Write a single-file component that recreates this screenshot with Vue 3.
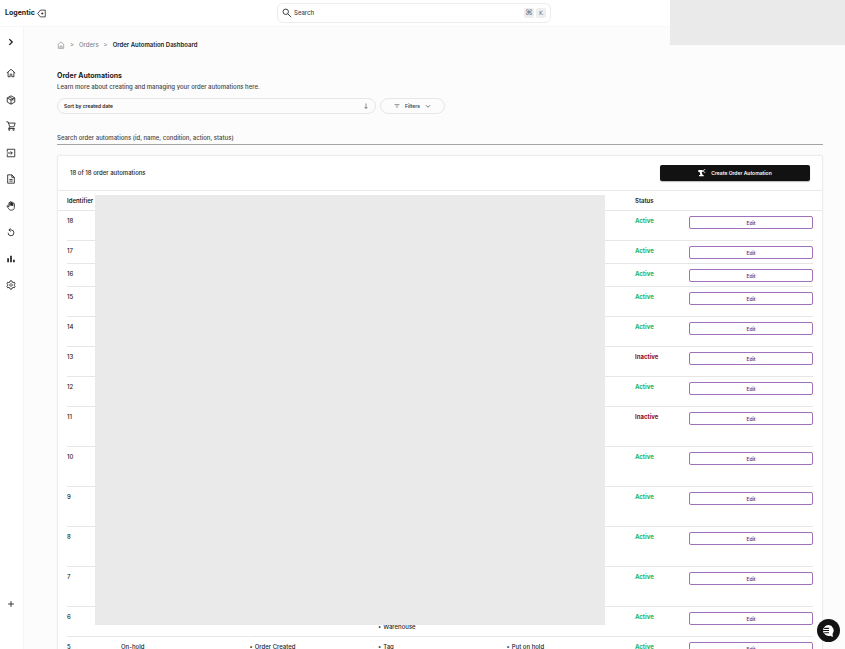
<script setup>
import { ref } from 'vue';

const search = ref('');
const query = ref('');
const sort = ref('created');

const navItems = [
  { name: 'Home', d: 'M2 12 12 3l10 9M5 10v11h5v-5a2 2 0 0 1 4 0v5h5V10' },
  { name: 'Products', d: 'M12 2 21 7v10l-9 5-9-5V7zM3 7l9 5 9-5M12 12v10M7.500 4.500l9 5v4' },
  {
    name: 'Orders',
    d: 'M1 2h4l4 12h10l3-9H6M9 14l-3 4h15M8 20a1.500 1.500 0 1 0 .1 0M18 20a1.500 1.500 0 1 0 .1 0',
  },
  { name: 'Inbound', d: 'M3 9V3h18v18H3v-6M2 12h13M11 8l4 4-4 4' },
  { name: 'Documents', d: 'M4 2h10l6 6v14H4zM14 2v6h6M8 13h8M8 17h8' },
  {
    name: 'Holds',
    d: 'M7 14V5a1.500 1.500 0 0 1 3 0v6V3a1.500 1.500 0 0 1 3 0v8V4a1.500 1.500 0 0 1 3 0v8V7a1.500 1.500 0 0 1 4 0v8c0 5-3 7-7 7-4 0-6-2-7-4l-4-6c1-2 3-1 5 2',
  },
  { name: 'Returns', d: 'M5 14a7 7 0 1 0 7-7H7M11 3 7 7l4 4' },
  { name: 'Analytics', d: 'M5 10v10M12 4v16M19 14v6' },
  {
    name: 'Settings',
    d: 'M10 2h4l.7 3 2.300 1.300 3-1 2 3.500-2.300 2v2.400l2.300 2-2 3.500-3-1-2.300 1.300-.7 3h-4l-.7-3L7 17.700l-3 1-2-3.500 2.300-2v-2.400L2 8.800l2-3.500 3 1L9.300 5zM12 9a3 3 0 1 0 .1 0',
  },
];

const automations = [
  { id: 18, active: true, size: 'medium' },
  { id: 17, active: true, size: 'small' },
  { id: 16, active: true, size: 'small' },
  { id: 15, active: true, size: 'medium' },
  { id: 14, active: true, size: 'medium' },
  { id: 13, active: false, size: 'medium' },
  { id: 12, active: true, size: 'medium' },
  { id: 11, active: false, size: 'large' },
  { id: 10, active: true, size: 'large' },
  { id: 9, active: true, size: 'large' },
  { id: 8, active: true, size: 'large' },
  { id: 7, active: true, size: 'large' },
  { id: 6, active: true, size: 'medium', conditions: ['', 'Warehouse'] },
  {
    id: 5,
    active: true,
    size: 'medium',
    name: 'On-hold',
    triggers: ['Order Created'],
    conditions: ['Tag'],
    actions: ['Put on hold'],
  },
];
</script>

<template>
  <div class="shell">
    <header class="topbar">
      <a class="logo" href="#">
        Logentic
        <svg viewBox="0 0 24 24"><path d="M9 3h13v18H9L2 12zM17 12h-6M14 9v6" /></svg>
      </a>
      <label class="search">
        <svg viewBox="0 0 24 24"><circle cx="9" cy="9" r="6.500" /><path d="m14 14 8 8" /></svg>
        <input v-model="search" type="text" placeholder="Search" aria-label="Search" />
        <kbd>⌘</kbd>
        <kbd>K</kbd>
      </label>
    </header>
    <div class="account"></div>

    <div class="body">
      <aside class="sidebar">
        <button class="icon-btn" aria-label="Expand menu">
          <svg viewBox="0 0 24 24"><path class="thick" d="m8 5 7 7-7 7" /></svg>
        </button>
        <nav class="nav">
          <a v-for="item in navItems" :key="item.name" href="#" :aria-label="item.name">
            <svg viewBox="0 0 24 24" :class="{ bars: item.name === 'Analytics' }">
              <path :d="item.d" />
            </svg>
          </a>
        </nav>
        <button class="icon-btn add" aria-label="Add">
          <svg viewBox="0 0 24 24"><path d="M12 5v14M5 12h14" /></svg>
        </button>
      </aside>

      <main class="content">
        <nav class="breadcrumb">
          <a href="#" aria-label="Home">
            <svg viewBox="0 0 24 24"><path d="M4 9.500 12 3l8 6.500V22H4zM9 22v-7h6v7" /></svg>
          </a>
          <span>&gt;</span>
          <a href="#">Orders</a>
          <span>&gt;</span>
          <strong>Order Automation Dashboard</strong>
        </nav>

        <h1>Order Automations</h1>
        <p class="intro">Learn more about creating and managing your order automations here.</p>

        <div class="controls">
          <div class="sort">
            <select v-model="sort" aria-label="Sort">
              <option value="created">Sort by created date</option>
              <option value="name">Sort by name</option>
            </select>
            <svg viewBox="0 0 24 24"><path d="M12 2v20M6 16l6 6 6-6" /></svg>
          </div>
          <button class="filters">
            <svg viewBox="0 0 24 24"><path d="M2 6h20M6 12h12M10 18h4" /></svg>
            Filters
            <svg viewBox="0 0 24 24"><path class="thick" d="m4 9 8 8 8-8" /></svg>
          </button>
        </div>

        <input
          v-model="query"
          class="query"
          type="text"
          placeholder="Search order automations (id, name, condition, action, status)"
          aria-label="Search order automations"
        />

        <section class="card">
          <div class="card-head">
            <span>18 of 18 order automations</span>
            <button class="create">
              <svg viewBox="0 0 24 24">
                <path d="M1 3h13v6h-3l3 9h3v4H3v-4h4L5 9H1z" />
                <path class="claw" d="M13 6h4M22 2h-4l-2 4 2 4h4" />
              </svg>
              Create Order Automation
            </button>
          </div>
          <div class="table-wrap">
            <table>
              <thead>
                <tr>
                  <th class="col-id">Identifier</th>
                  <th></th>
                  <th></th>
                  <th></th>
                  <th></th>
                  <th class="col-status">Status</th>
                  <th class="col-edit"></th>
                </tr>
              </thead>
              <tbody>
                <tr v-for="row in automations" :key="row.id" :class="row.size">
                  <td>{{ row.id }}</td>
                  <td>{{ row.name }}</td>
                  <td>
                    <div v-for="t in row.triggers" :key="t"><i>•</i>{{ t }}</div>
                  </td>
                  <td>
                    <div v-for="c in row.conditions" :key="c" class="line">
                      <template v-if="c"><i>•</i>{{ c }}</template>
                    </div>
                  </td>
                  <td>
                    <div v-for="a in row.actions" :key="a"><i>•</i>{{ a }}</div>
                  </td>
                  <td :class="row.active ? 'active' : 'inactive'">
                    {{ row.active ? 'Active' : 'Inactive' }}
                  </td>
                  <td><button class="edit">Edit</button></td>
                </tr>
              </tbody>
            </table>
            <div class="cover"></div>
          </div>
        </section>
      </main>
    </div>

    <button class="chat" aria-label="Chat">
      <svg viewBox="0 0 24 24">
        <path d="M12 2a10 10 0 1 0 3 19.500l5 2.500-.5-6A10 10 0 0 0 12 2z" />
        <path class="lines" d="M4 8h9M2 12h11M4 16h9" />
      </svg>
    </button>
  </div>
</template>

<style>
body {
  background: #fcfcfc;
}
</style>

<style scoped>
.shell {
  position: relative;
  display: flex;
  flex-direction: column;
  height: 100vh;
  overflow: hidden;
  font-family: Inter, sans-serif;
  font-size: 6px;
  line-height: 10px;
  font-weight: 500;
  color: #1c1c1c;
}
* {
  box-sizing: border-box;
}
button,
input,
select {
  font: inherit;
  color: inherit;
  background: none;
  border: 0;
  padding: 0;
  outline: none;
}
button {
  cursor: pointer;
}
a {
  color: inherit;
  text-decoration: none;
}
svg {
  display: block;
  flex: none;
  fill: none;
  stroke: currentColor;
  stroke-width: 2;
}
.topbar {
  flex: none;
  display: flex;
  align-items: center;
  justify-content: center;
  height: 27px;
  padding-right: 22px;
  background: #fff;
  border-bottom: 1px solid #f7f7f7;
}
.logo {
  flex: 1;
  display: flex;
  align-items: center;
  gap: 2px;
  padding-left: 5px;
  font-size: 7px;
  font-weight: 700;
}
.logo svg {
  width: 9px;
  height: 9px;
}
.search {
  display: flex;
  align-items: center;
  gap: 2px;
  width: 274px;
  height: 20px;
  padding: 0 4px;
  border: 1px solid #ececec;
  border-radius: 6px;
}
.topbar::after {
  content: '';
  flex: 1;
}
.search svg {
  width: 10px;
  height: 10px;
}
.search input {
  flex: 1;
  min-width: 0;
}
input::placeholder {
  color: #444;
  opacity: 1;
}
kbd {
  width: 10px;
  border-radius: 2px;
  background: #eee;
  color: #777;
  font-family: 'DejaVu Sans', sans-serif;
  font-size: 6px;
  text-align: center;
}
kbd:first-of-type {
  font-size: 8px;
}
.account {
  position: absolute;
  top: 0;
  right: 0;
  width: 175px;
  height: 45px;
  background: #eaeaea;
}
.body {
  flex: 1;
  display: flex;
  min-height: 0;
}
.sidebar {
  flex: none;
  display: flex;
  flex-direction: column;
  align-items: center;
  width: 24px;
  padding: 10px 1px 40px 0;
  background: #fff;
  border-right: 1px solid #f5f5f5;
}
.sidebar svg {
  width: 10px;
  height: 10px;
}
.thick {
  stroke-width: 3;
}
.nav {
  display: flex;
  flex-direction: column;
  justify-content: space-between;
  height: 222px;
  margin-top: 21px;
}
.bars {
  stroke-width: 4;
}
.add {
  margin-top: auto;
}
.content {
  flex: 1;
  min-width: 0;
  padding: 13px 22px 0 33px;
  overflow: auto;
  scrollbar-width: none;
}
.breadcrumb {
  display: flex;
  align-items: center;
  gap: 5px;
  color: #888;
}
.breadcrumb svg {
  width: 8px;
  height: 8px;
}
.breadcrumb strong {
  color: #1c1c1c;
  font-weight: 600;
}
h1 {
  margin: 20px 0 0;
  font-size: 7px;
  line-height: 12px;
  font-weight: 700;
}
.intro {
  margin: 0;
  color: #444;
}
.controls {
  display: flex;
  gap: 4px;
  margin-top: 6px;
}
.sort {
  display: flex;
  align-items: center;
  width: 319px;
  height: 16px;
  padding: 0 6px;
  border: 1px solid #e6e6e6;
  border-radius: 8px;
}
.sort select {
  flex: 1;
  appearance: none;
  font-size: 5px;
  font-weight: 600;
}
.sort svg {
  width: 6px;
  height: 6px;
}
.filters {
  display: flex;
  align-items: center;
  justify-content: center;
  gap: 5px;
  width: 65px;
  height: 16px;
  border: 1px solid #e6e6e6;
  border-radius: 8px;
  color: #444;
  font-size: 5px;
  font-weight: 600;
}
.filters svg {
  width: 6px;
  height: 6px;
}
.query {
  display: block;
  width: 100%;
  height: 14px;
  margin-top: 17px;
  border-bottom: 1px solid #a5a5a5;
}
.card {
  margin-top: 10px;
  background: #fff;
  border: 1px solid #ececec;
  border-radius: 2px;
  box-shadow: 0 0 2px #eee;
}
.card-head {
  display: flex;
  align-items: center;
  justify-content: space-between;
  height: 35px;
  padding: 0 12px;
  border-bottom: 1px solid #ebebeb;
}
.create {
  display: flex;
  align-items: center;
  justify-content: center;
  gap: 5px;
  width: 150px;
  height: 16px;
  border-radius: 2px;
  background: #121212;
  color: #fff;
  font-size: 5px;
  font-weight: 600;
  box-shadow: 0 1px 1px #bbb;
}
.create svg {
  width: 8px;
  height: 8px;
  fill: #fff;
  stroke: none;
}
.create .claw {
  fill: none;
  stroke: #fff;
  stroke-width: 2;
}
.table-wrap {
  position: relative;
}
table {
  width: 100%;
  table-layout: fixed;
  border-collapse: separate;
  border-spacing: 0;
}
th {
  height: 20px;
  padding: 0;
  border-bottom: 1px solid #e6e6e6;
  text-align: left;
  font-weight: 600;
}
td {
  padding: 5px 0;
  vertical-align: top;
  background: linear-gradient(#e6e6e6, #e6e6e6) right bottom / 100% 1px no-repeat;
}
th:first-child,
td:first-child {
  padding-left: 9px;
}
td:last-child {
  padding-right: 9px;
}
td:first-child {
  background-size: calc(100% - 9px) 1px;
}
td:last-child {
  background-position: left bottom;
  background-size: calc(100% - 9px) 1px;
}
td i {
  margin-right: 2px;
  font-style: normal;
}
.col-id {
  width: 63px;
}
.col-status {
  width: 54px;
}
.col-edit {
  width: 133px;
}
.small {
  height: 23px;
}
.medium {
  height: 30px;
}
.large {
  height: 40px;
}
.line {
  min-height: 10px;
}
.active {
  color: #1fb35f;
  font-weight: 700;
}
.inactive {
  color: #8f0d28;
  font-weight: 700;
}
.edit {
  display: block;
  width: 100%;
  height: 13px;
  border: 1px solid #a070b8;
  border-radius: 2px;
  color: #6b3a86;
  font-size: 5px;
  font-weight: 600;
}
.cover {
  position: absolute;
  top: 4px;
  left: 37px;
  right: 217px;
  height: 430px;
  background: #eaeaea;
}
.chat {
  position: absolute;
  right: 5px;
  bottom: 7px;
  display: grid;
  place-items: center;
  width: 23px;
  height: 23px;
  border-radius: 50%;
  background: #121212;
}
.chat svg {
  width: 13px;
  height: 13px;
  fill: #fff;
  stroke: none;
}
.chat .lines {
  fill: none;
  stroke: #121212;
  stroke-width: 2;
}
</style>
